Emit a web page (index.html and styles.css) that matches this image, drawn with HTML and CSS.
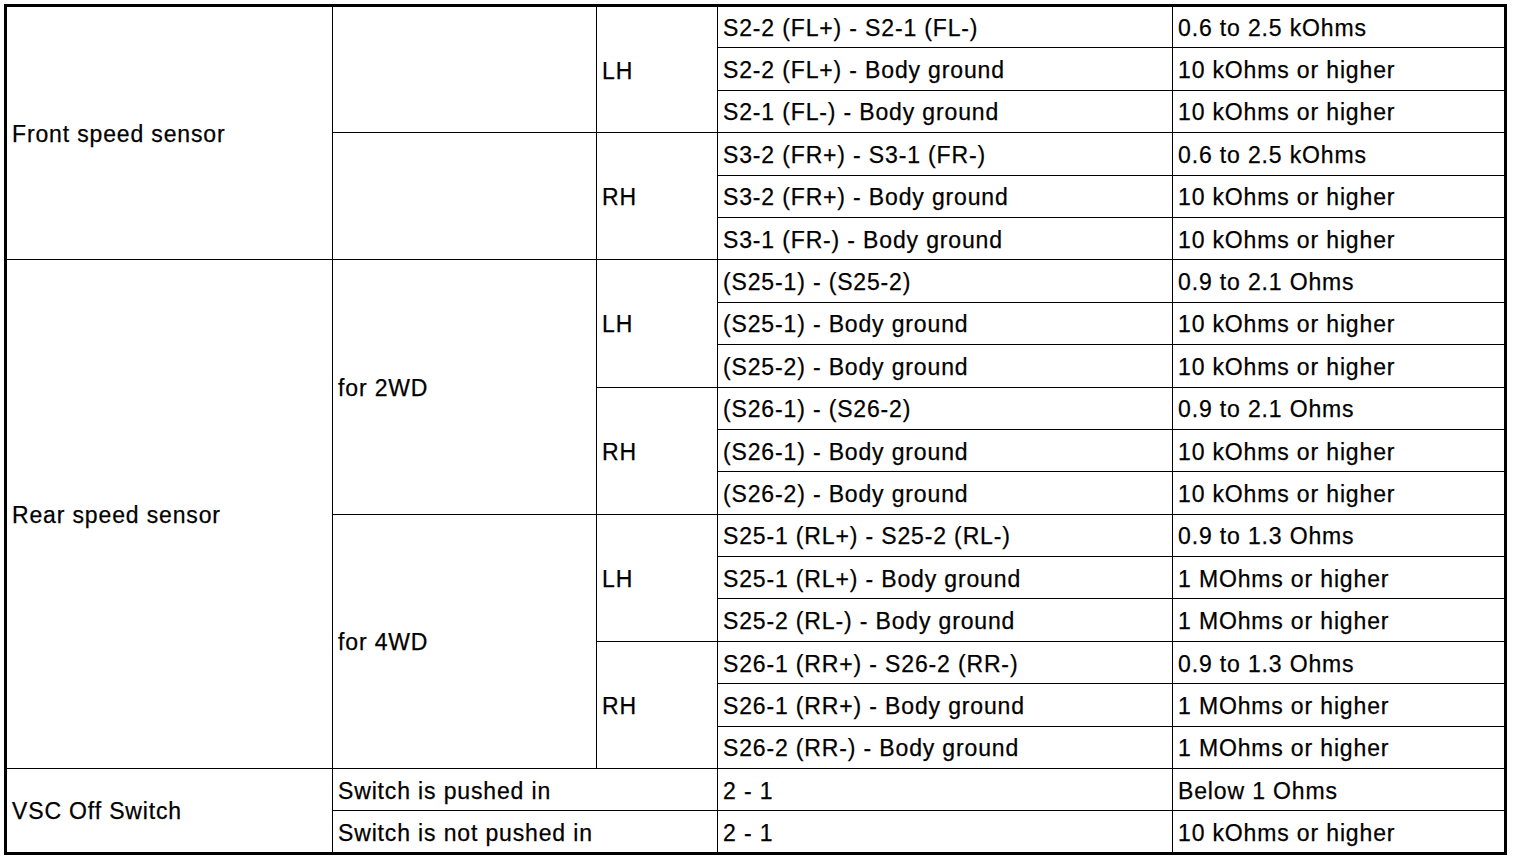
FILE: index.html
```html
<!DOCTYPE html>
<html>
<head>
<meta charset="utf-8">
<link rel="stylesheet" href="styles.css">
</head>
<body>
<table class="spec">
  <colgroup>
    <col class="c1"><col class="c2"><col class="c3"><col class="c4"><col class="c5">
  </colgroup>
  <tbody>
    <tr><td rowspan="6">Front speed sensor</td><td rowspan="3"></td><td rowspan="3">LH</td><td>S2-2 (FL+) - S2-1 (FL-)</td><td>0.6 to 2.5 kOhms</td></tr>
    <tr><td>S2-2 (FL+) - Body ground</td><td>10 kOhms or higher</td></tr>
    <tr><td>S2-1 (FL-) - Body ground</td><td>10 kOhms or higher</td></tr>
    <tr><td rowspan="3"></td><td rowspan="3">RH</td><td>S3-2 (FR+) - S3-1 (FR-)</td><td>0.6 to 2.5 kOhms</td></tr>
    <tr><td>S3-2 (FR+) - Body ground</td><td>10 kOhms or higher</td></tr>
    <tr><td>S3-1 (FR-) - Body ground</td><td>10 kOhms or higher</td></tr>
    <tr><td rowspan="12">Rear speed sensor</td><td rowspan="6">for 2WD</td><td rowspan="3">LH</td><td>(S25-1) - (S25-2)</td><td>0.9 to 2.1 Ohms</td></tr>
    <tr><td>(S25-1) - Body ground</td><td>10 kOhms or higher</td></tr>
    <tr><td>(S25-2) - Body ground</td><td>10 kOhms or higher</td></tr>
    <tr><td rowspan="3">RH</td><td>(S26-1) - (S26-2)</td><td>0.9 to 2.1 Ohms</td></tr>
    <tr><td>(S26-1) - Body ground</td><td>10 kOhms or higher</td></tr>
    <tr><td>(S26-2) - Body ground</td><td>10 kOhms or higher</td></tr>
    <tr><td rowspan="6">for 4WD</td><td rowspan="3">LH</td><td>S25-1 (RL+) - S25-2 (RL-)</td><td>0.9 to 1.3 Ohms</td></tr>
    <tr><td>S25-1 (RL+) - Body ground</td><td>1 MOhms or higher</td></tr>
    <tr><td>S25-2 (RL-) - Body ground</td><td>1 MOhms or higher</td></tr>
    <tr><td rowspan="3">RH</td><td>S26-1 (RR+) - S26-2 (RR-)</td><td>0.9 to 1.3 Ohms</td></tr>
    <tr><td>S26-1 (RR+) - Body ground</td><td>1 MOhms or higher</td></tr>
    <tr><td>S26-2 (RR-) - Body ground</td><td>1 MOhms or higher</td></tr>
    <tr><td rowspan="2">VSC Off Switch</td><td colspan="2">Switch is pushed in</td><td>2 - 1</td><td>Below 1 Ohms</td></tr>
    <tr><td colspan="2">Switch is not pushed in</td><td>2 - 1</td><td>10 kOhms or higher</td></tr>
  </tbody>
</table>
</body>
</html>
```

FILE: styles.css
```css
html, body {
  margin: 0;
  padding: 0;
  background: #fff;
}
body {
  padding: 4px 0 0 4px;
}
.spec {
  border-collapse: collapse;
  table-layout: fixed;
  width: 1503px;
  border: 3px solid #000;
  font-family: "Liberation Sans", Arial, sans-serif;
  font-size: 23px;
  letter-spacing: 0.85px;
  color: #000;
  -webkit-text-stroke: 0.25px #000;
}
.c1 { width: 327px; }
.c2 { width: 264px; }
.c3 { width: 121px; }
.c4 { width: 455px; }
.spec tr {
  height: 42.4px;
}
.spec td {
  border: 1px solid #000;
  padding: 2px 5px 0 5px;
  vertical-align: middle;
  white-space: nowrap;
  line-height: 24px;
}
```
